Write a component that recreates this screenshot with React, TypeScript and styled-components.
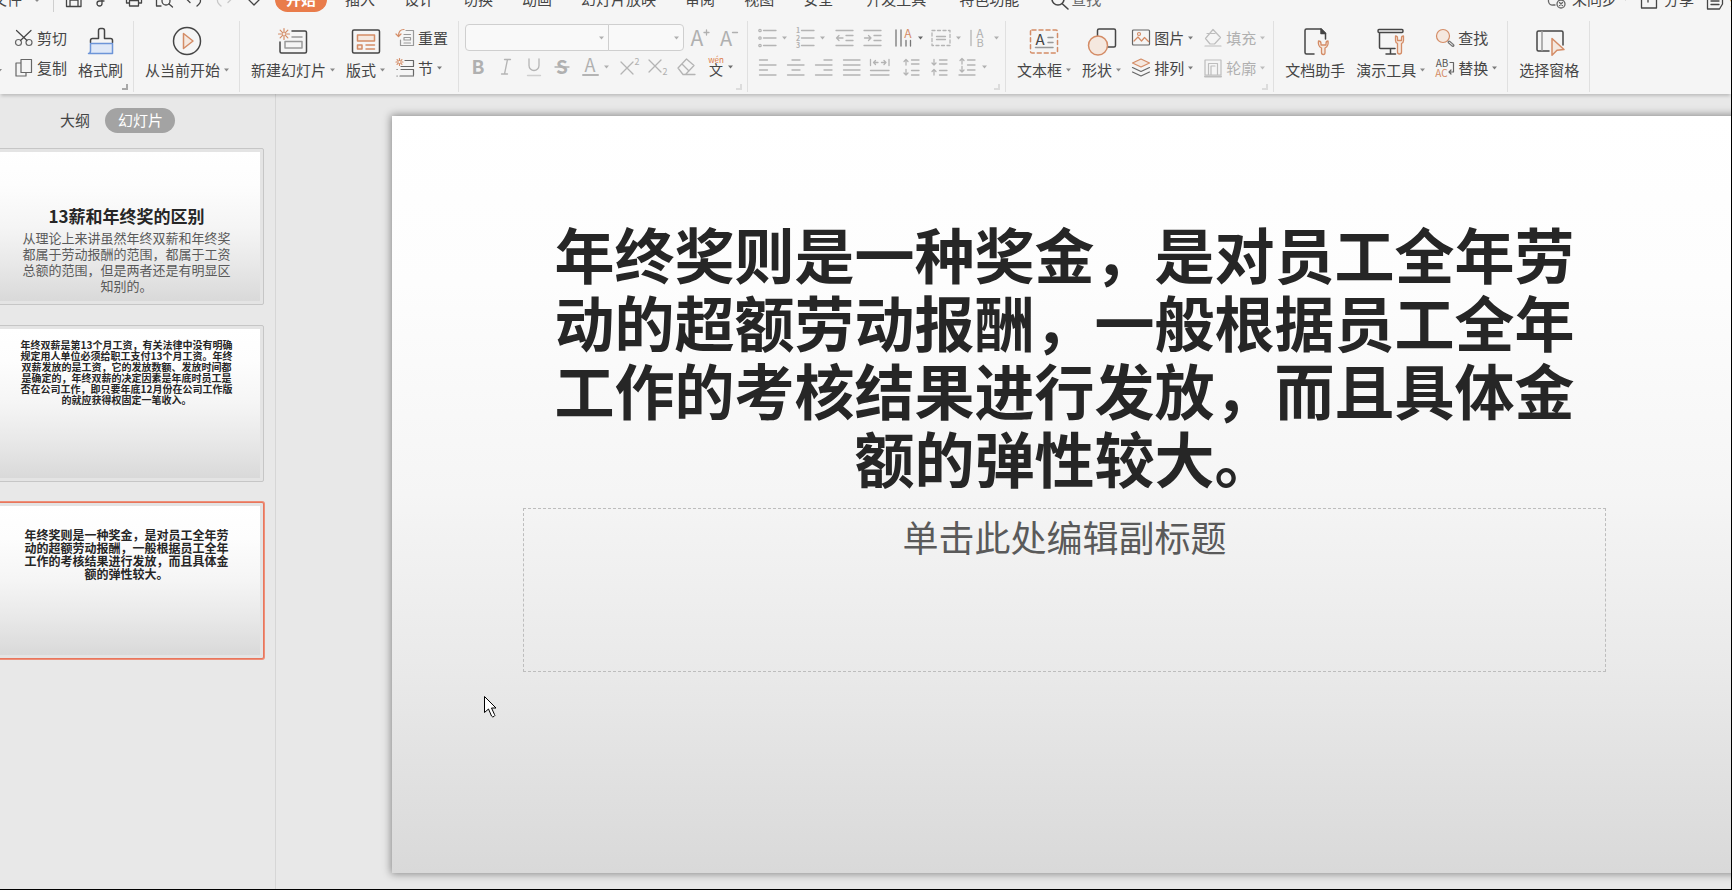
import React from "react";
import styled, { createGlobalStyle, css } from "styled-components";

const ink = "#454545";
const soft = "#b0b0b0";
const accent = "#d48c66";
const tint = "#f5e8df";

const GlobalStyle = createGlobalStyle`
  *, *::before, *::after { box-sizing: border-box; }
  html, body { margin: 0; padding: 0; }
  body {
    font-family: "Noto Sans CJK SC", "Liberation Sans", sans-serif;
    font-size: 15px;
    line-height: 20px;
    color: ${ink};
    background: #e8e8e8;
  }
  button, input, select { font: inherit; color: inherit; margin: 0; padding: 0; border: 0; background: none; }
  svg { display: block; flex: none; overflow: visible; }
  h1, h2, p { margin: 0; font-weight: 400; }
`;

const Window = styled.div`
  display: flex;
  flex-direction: column;
  min-height: 100vh;
  overflow: hidden;
  border-right: 1px solid #000;
  border-bottom: 1px solid #000;
`;

/* ---------- menu bar ---------- */

const MenuBar = styled.header`
  display: flex;
  align-items: flex-end;
  height: 20px;
  padding-bottom: 8px;
  background: #f5f5f5;
  overflow: hidden;
  white-space: nowrap;
`;

const FileMenu = styled.button`
  display: flex;
  align-items: center;
  gap: 10px;
  height: 25px;
  margin-left: -8px;
  padding-bottom: 2px;
`;

const BarDivider = styled.span`
  width: 1px;
  height: 26px;
  margin: 0 10px 0 11px;
  background: #cfcfcf;
`;

const QuickAccess = styled.div`
  display: flex;
  gap: 11px;
  margin-right: 12px;
`;

const QuickButton = styled.button`
  display: grid;
  place-items: center;
  width: 19px;
  height: 25px;
  padding-bottom: 2px;
`;

const TabList = styled.nav`
  display: flex;
  gap: 29px;
`;

const Tab = styled.button<{ $active?: boolean; $wide?: boolean }>`
  height: 25px;
  padding-bottom: 2px;
  ${(p) => p.$wide && css`margin-left: 4px;`}
  ${(p) =>
    p.$active &&
    css`
      padding: 0 11px 2px;
      margin-right: -11px;
      border-radius: 13px;
      background: #e97c4b;
      color: #fff;
      font-weight: 700;
    `}
`;

const SearchBox = styled.label`
  display: flex;
  align-items: center;
  gap: 2px;
  height: 25px;
  margin-left: 32px;
  padding-bottom: 2px;
  color: #6a6a6a;
`;

const SearchInput = styled.input`
  width: 80px;
  height: 23px;
  &::placeholder { color: #6a6a6a; opacity: 1; }
`;

const BarActions = styled.div`
  display: flex;
  gap: 12px;
  margin-left: auto;
  margin-right: -29px;
`;

const BarAction = styled.button`
  display: flex;
  align-items: center;
  gap: 6px;
  height: 25px;
  padding-bottom: 2px;
`;

/* ---------- ribbon ---------- */

const Ribbon = styled.div`
  position: relative;
  z-index: 1;
  display: flex;
  padding: 1px 0 2px;
  background: #f5f5f5;
  box-shadow: 0 3px 3px -1px rgba(0, 0, 0, 0.18);
`;

const Group = styled.section<{ $left?: number; $right?: number }>`
  position: relative;
  display: flex;
  flex: none;
  gap: 11px;
  height: 71px;
  padding: 0 ${(p) => p.$right ?? 10}px 0 ${(p) => p.$left ?? 11}px;
  border-right: 1px solid #e0e0e0;
`;

const Launcher = styled.button<{ $dim?: boolean }>`
  position: absolute;
  right: 5px;
  bottom: 2px;
  width: 6px;
  height: 6px;
  border-right: 2px solid ${(p) => (p.$dim ? "#dcdcdc" : "#a8a8a8")};
  border-bottom: 2px solid ${(p) => (p.$dim ? "#dcdcdc" : "#a8a8a8")};
`;

const BigButton = styled.button`
  display: flex;
  flex-direction: column;
  align-items: center;
  gap: 6px;
  height: 71px;
  padding-top: 5px;
`;

const Label = styled.span`
  display: flex;
  align-items: center;
  gap: 4px;
  height: 20px;
  white-space: nowrap;
`;

const Stack = styled.div`
  display: flex;
  flex-direction: column;
  padding-top: 2px;
`;

const SmallButton = styled.button`
  display: flex;
  align-items: center;
  gap: 4px;
  height: 30px;
  &:disabled { color: ${soft}; }
`;

const PasteTail = styled.button`
  width: 5px;
  height: 71px;
  padding-top: 26px;
  margin-left: -3px;
  margin-right: 2px;
`;

const ToolPanel = styled.div`
  display: flex;
  flex-direction: column;
  padding-top: 2px;
`;

const ToolRow = styled.div`
  display: flex;
  align-items: center;
  height: 29px;
`;

const Tool = styled.button<{ $gap?: boolean }>`
  display: flex;
  align-items: center;
  gap: 3px;
  height: 28px;
  padding: 0 4px;
  ${(p) => p.$gap && css`margin-left: 4px;`}
`;

const Combo = styled.label<{ $side: "left" | "right" }>`
  display: flex;
  align-items: center;
  height: 27px;
  padding-right: 4px;
  border: 1px solid #cfcfcf;
  background: #f9f9f9;
  ${(p) =>
    p.$side === "left"
      ? css`width: 144px; margin-left: 1px; border-radius: 4px 0 0 4px;`
      : css`width: 76px; margin-left: -1px; margin-right: 1px; border-radius: 0 4px 4px 0;`}
`;

const ComboSelect = styled.select`
  flex: 1;
  min-width: 0;
  height: 25px;
  appearance: none;
`;

/* ---------- workspace ---------- */

const Workspace = styled.div`
  display: flex;
  flex: 1;
`;

const Sidebar = styled.aside`
  flex: none;
  width: 276px;
  border-right: 1px solid #d6d6d6;
  overflow: hidden;
`;

const ViewSwitch = styled.div`
  display: flex;
  align-items: center;
  gap: 15px;
  padding: 14px 0 15px 60px;
`;

const ViewButton = styled.button<{ $active?: boolean }>`
  height: 25px;
  padding-bottom: 2px;
  ${(p) =>
    p.$active &&
    css`
      padding: 0 12px 2px 13px;
      border-radius: 13px;
      background: #a3a3a3;
      color: #fff;
    `}
`;

const ThumbList = styled.div`
  display: flex;
  flex-direction: column;
  gap: 20px;
  margin-left: -11px;
`;

const paper = css`
  background: linear-gradient(#fff 0%, #fdfdfd 22%, #f5f5f5 50%, #e9e9e9 74%, #d9d9d9 100%);
`;

const Thumb = styled.button<{ $active?: boolean }>`
  display: block;
  width: 275px;
  height: 157px;
  padding: 3px;
  border: 1px solid ${(p) => (p.$active ? "#e8765c" : "#c6c6c6")};
  border-radius: 2px;
  background: #e4e4e4;
  ${(p) => p.$active && css`box-shadow: 0 0 0 1px #ee8f79;`}
`;

const ThumbPage = styled.span<{ $top: number }>`
  ${paper}
  display: flex;
  flex-direction: column;
  align-items: center;
  gap: 2px;
  height: 149px;
  padding-top: ${(p) => p.$top}px;
  text-align: center;
  white-space: nowrap;
`;

const ThumbText = styled.span<{ $size: number; $line: number; $bold?: boolean }>`
  font-size: ${(p) => p.$size}px;
  line-height: ${(p) => p.$line}px;
  font-weight: ${(p) => (p.$bold ? 700 : 400)};
  color: ${(p) => (p.$bold ? "#262626" : "#5a5a5a")};
`;

const Stage = styled.main`
  flex: 1;
  min-width: 0;
  padding: 22px 0 16px 116px;
  overflow: hidden;
`;

const Slide = styled.article`
  ${paper}
  position: relative;
  display: flex;
  flex-direction: column;
  align-items: center;
  aspect-ratio: 16 / 9;
  margin-right: -7px;
  padding: 103px 132px 0 131px;
  box-shadow: 0 0 8px 1px rgba(0, 0, 0, 0.42);
`;

const SlideTitle = styled.h1`
  font-size: 60px;
  line-height: 68px;
  font-weight: 700;
  color: #262626;
  text-align: center;
  white-space: nowrap;
`;

const Subtitle = styled.p`
  align-self: stretch;
  height: 164px;
  margin-top: 17px;
  padding-top: 5px;
  border: 1px dashed #bdbdbd;
  font-size: 36px;
  line-height: 44px;
  color: #5a5a5a;
  text-align: center;
`;

const Pointer = styled.span`
  position: absolute;
  left: 92px;
  top: 580px;
`;

/* ---------- drawings ---------- */

const Svg = ({ s = 20, w, children, c = ink, sw = 1.3 }: { s?: number; w?: number; children: React.ReactNode; c?: string; sw?: number }) => (
  <svg
    width={w ?? s}
    height={s}
    viewBox={`0 0 ${w ?? s} ${s}`}
    fill="none"
    stroke={c}
    strokeWidth={sw}
    strokeLinecap="round"
    strokeLinejoin="round"
    aria-hidden="true"
  >
    {children}
  </svg>
);

const Arrow = ({ c = "#8a8a8a", w = 5 }: { c?: string; w?: number }) => (
  <svg width={w} height="4" viewBox="0 0 5 4" fill={c} aria-hidden="true">
    <path d="M0 .5h5L2.5 3.5z" />
  </svg>
);

const Chevron = ({ c = "#888", s = 10 }: { c?: string; s?: number }) => (
  <Svg s={s} c={c}>
    <path d={`M.5 2.5 ${s / 2} ${s / 2 + 2} ${s - 0.5} 2.5`} />
  </Svg>
);

const Glyph = ({ x, y, size, c = soft, bold, children }: { x: number; y: number; size: number; c?: string; bold?: boolean; children: string }) => (
  <text
    x={x}
    y={y}
    fontSize={size}
    fill={c}
    stroke="none"
    fontFamily='"Noto Sans CJK SC", sans-serif'
    fontWeight={bold ? 700 : 400}
    textAnchor="middle"
  >
    {children}
  </text>
);

const Star = ({ x, y, r }: { x: number; y: number; r: number }) => {
  const d = r * 0.7;
  return (
    <path
      stroke={accent}
      strokeWidth={1.2}
      d={`M${x - r} ${y}H${x - 1.5}M${x + 1.5} ${y}H${x + r}M${x} ${y - r}V${y - 1.5}M${x} ${y + 1.5}V${y + r}M${x - d} ${y - d}L${x - 1.2} ${y - 1.2}M${x + 1.2} ${y + 1.2}L${x + d} ${y + d}M${x - d} ${y + d}L${x - 1.2} ${y + 1.2}M${x + 1.2} ${y - 1.2}L${x + d} ${y - d}`}
    />
  );
};

const wrench = "M0 0v4.5q0 2 2 3V16q0 2 2 2t2-2V7.500q2-1 2-3V0q-2 0-2 2v2.500H2V2Q2 0 0 0z";

const quick: { name: string; art: React.ReactNode }[] = [
  { name: "保存", art: <Svg s={18}><path d="M1.500 1.500h12l2.500 2.500v12.500H1.500zM5 16V10h8v6M5 2v4h7V2" /></Svg> },
  { name: "输出", art: <Svg s={18}><path d="M5 9h6a3.500 3.500 0 0 0 0-7H6M7 9v4.500a2.500 2.500 0 1 1-2.500-2.500H9" /></Svg> },
  { name: "打印", art: <Svg s={18}><path d="M4 13H1.500V6h15v7H14M4.500 6V1.500h9V6M4.500 10.500h9V16h-9z" /></Svg> },
  { name: "预览", art: <Svg s={18}><path d="M6 16H1.500V1.500h13V6" /><circle cx="11" cy="11" r="4" /><path d="m14 14 3.500 3" /></Svg> },
  { name: "撤销", art: <Svg s={18}><path d="M5 4 1 8.500 5 12.500M2 8.500h9.500q4-.5 4 2.500 0 2-3.500 5" /></Svg> },
  { name: "恢复", art: <Svg s={18} c="#c8c8c8"><path d="m13 4 4 4.500-4 4M16 8.500H7q-5-.5-4.500 2.500 0 2 3.500 5" /></Svg> },
  { name: "更多", art: <Svg s={18}><path d="m4 10 5 5 5-5" /></Svg> },
];

const tabs = ["插入", "设计", "切换", "动画", "幻灯片放映", "审阅", "视图", "安全", "开发工具", "特色功能"];

type ToolItem = { name: string; art: React.ReactNode; drop?: string; gap?: boolean };

const Tools = ({ items }: { items: ToolItem[] }) => (
  <>
    {items.map((t) => (
      <Tool key={t.name} aria-label={t.name} $gap={t.gap}>
        {t.art}
        {t.drop && <Arrow c={t.drop} w={7} />}
      </Tool>
    ))}
  </>
);

const G = "#b4b4b4";

const sizeTools: ToolItem[] = [
  { name: "增大字号", art: <Svg><Glyph x={8} y={18} size={21}>A</Glyph><path stroke={soft} d="M17.500 2v5M15 4.500h5" /></Svg> },
  { name: "减小字号", art: <Svg><Glyph x={9} y={18} size={20}>A</Glyph><path stroke={soft} d="M15.500 4.500h5" /></Svg> },
];

const fontTools: ToolItem[] = [
  { name: "加粗", art: <Svg><Glyph x={10} y={17} size={19} bold>B</Glyph></Svg> },
  { name: "倾斜", art: <Svg c={G}><path d="M8.500 2.500h6M5.500 17h6M11.500 2.500 8.500 17" /></Svg> },
  { name: "下划线", art: <Svg c={G}><path d="M5 2v6.500a5 5 0 0 0 10 0V2" /><path stroke="#cfcfcf" d="M3.500 18.500h13" /></Svg> },
  { name: "删除线", art: <Svg><Glyph x={10} y={17} size={19} bold>S</Glyph><path stroke={soft} d="M3 10h14" /></Svg> },
  { name: "字体颜色", art: <Svg><Glyph x={10} y={15} size={18}>A</Glyph><path stroke={G} strokeWidth="2" d="M3 18h15" /></Svg>, drop: soft },
  { name: "上标", art: <Svg c={G}><path d="m3 5 12 12M15 5 3 17" /><Glyph x={19} y={8} size={9}>2</Glyph></Svg> },
  { name: "下标", art: <Svg c={G}><path d="m3 3 12 12M15 3 3 15" /><Glyph x={19} y={18} size={9}>2</Glyph></Svg> },
  { name: "清除格式", art: <Svg c={G}><path d="m4 11 8.500-9 7.500 6.500-8.500 9H9zM8 7l7 7M9 17.500h12" /></Svg> },
  { name: "拼音指南", art: <Svg w={22}><Glyph x={14} y={6} size={8} c="#dc7a45">wén</Glyph><Glyph x={14} y={18} size={14} c={ink}>文</Glyph></Svg>, drop: "#6e6e6e" },
];

const dots = "M5.500 2.500H18M5.500 10H18M5.500 17.500H18";

const listTools: ToolItem[] = [
  { name: "项目符号", art: <Svg c={G}><path d={dots} /><circle cx="2" cy="2.500" r="1.200" /><circle cx="2" cy="10" r="1.200" /><circle cx="2" cy="17.500" r="1.200" /></Svg>, drop: soft },
  { name: "编号", art: <Svg c={G}><path d={dots} /><Glyph x={2} y={5} size={7} bold>1</Glyph><Glyph x={2} y={12.500} size={7} bold>2</Glyph><Glyph x={2} y={20} size={7} bold>3</Glyph></Svg>, drop: soft },
  { name: "减少缩进", art: <Svg c={G}><path d="M2 2.500h17M12 7.500h7M12 12.500h7M2 17.500h17M2.500 10H9M5 7.500 2.500 10 5 12.500" /></Svg> },
  { name: "增加缩进", art: <Svg c={G}><path d="M2 2.500h17M12 7.500h7M12 12.500h7M2 17.500h17M2.500 10H9M6.500 7.500 9 10l-2.500 2.500" /></Svg> },
  { name: "文字方向", art: <Svg c="#777"><path d="M2 2v16M7 2v16M12 12.500V18M16.500 12.500V18" /><Glyph x={14} y={9.5} size={12} c={accent}>A</Glyph></Svg>, drop: "#666", gap: true },
  { name: "对齐文本", art: <Svg c={G}><rect x="0" y="2.500" width="18" height="15" strokeDasharray="3 2.500" /><path d="M4.500 8.500h9M4.500 11.500h9" /></Svg>, drop: soft },
  { name: "文字排列", art: <Svg c={G}><path d="M1 2.500v15" /><Glyph x={10} y={9.500} size={12}>A</Glyph><Glyph x={10} y={18.500} size={11}>B</Glyph></Svg>, drop: soft },
];

const alignTools: ToolItem[] = [
  { name: "左对齐", art: <Svg c={G}><path d="M1.500 3h8M1.500 8H18M1.500 13h8M1.500 18H18" /></Svg> },
  { name: "居中", art: <Svg c={G}><path d="M6 3h8M1.500 8H18M6 13h8M1.500 18H18" /></Svg> },
  { name: "右对齐", art: <Svg c={G}><path d="M10 3h8M1.500 8H18M10 13h8M1.500 18H18" /></Svg> },
  { name: "两端对齐", art: <Svg c={G}><path d="M1.500 3H18M1.500 8H18M1.500 13H18M1.500 18H18" /></Svg> },
  { name: "分散对齐", art: <Svg c={G}><path d="M.5 2.500v6M19 2.500v6M3.500 5.500H8M11.500 5.500H16M5.500 3.500l-2 2 2 2M14 3.500l2 2-2 2M.5 13.500H19M.5 18H19" /></Svg> },
  { name: "增大行距", art: <Svg c={G}><path d="M9.500 3H17M9.500 7H17M9.500 13.500H17M9.500 18H17M4 8V2.500M2 4.500l2-2 2 2M4 12.500V18M2 16l2 2 2-2" /></Svg>, gap: true },
  { name: "减小行距", art: <Svg c={G}><path d="M9.500 3H17M9.500 7H17M9.500 13.500H17M9.500 18H17M4 2.500V8M2 6l2 2 2-2M4 18v-5.500M2 14.500l2-2 2 2" /></Svg> },
  { name: "行距", art: <Svg c={G}><path d="M9.500 3H17M9.500 8H17M9.500 13H17M1 18h16M4 7V1.500M2 3.500l2-2 2 2M4 9.500V15M2 13l2 2 2-2" /></Svg>, drop: soft },
];

const Big = ({ text, drop, children }: { text: string; drop?: boolean; children: React.ReactNode }) => (
  <BigButton>
    <Svg s={28} sw={1.5}>{children}</Svg>
    <Label>{text}{drop && <Arrow />}</Label>
  </BigButton>
);

const Small = ({ text, drop, disabled, children }: { text: string; drop?: boolean; disabled?: boolean; children: React.ReactNode }) => (
  <SmallButton disabled={disabled}>
    <Svg s={18} c={disabled ? "#bdbdbd" : "#666"} sw={1.2}>{children}</Svg>
    <Label>{text}{drop && <Arrow c={disabled ? "#bdbdbd" : "#7a7a7a"} />}</Label>
  </SmallButton>
);

const Lines = ({ rows }: { rows: string[] }) => (
  <>
    {rows.map((row, i) => (
      <React.Fragment key={row}>
        {i > 0 && <br />}
        {row}
      </React.Fragment>
    ))}
  </>
);

const bonus = [
  "年终奖则是一种奖金，是对员工全年劳",
  "动的超额劳动报酬，一般根据员工全年",
  "工作的考核结果进行发放，而且具体金",
  "额的弹性较大。",
];

const theory = [
  "从理论上来讲虽然年终双薪和年终奖",
  "都属于劳动报酬的范围，都属于工资",
  "总额的范围，但是两者还是有明显区",
  "知别的。",
];

const doublePay = [
  "年终双薪是第13个月工资，有关法律中没有明确",
  "规定用人单位必须给职工支付13个月工资。年终",
  "双薪发放的是工资，它的发放数额、发放时间都",
  "是确定的，年终双薪的决定因素是年底时员工是",
  "否在公司工作，即只要年底12月份在公司工作版",
  "的就应获得权固定一笔收入。",
];

export default function App() {
  return (
    <>
      <GlobalStyle />
      <Window>
        <MenuBar>
          <FileMenu>文件<Chevron /></FileMenu>
          <BarDivider />
          <QuickAccess>
            {quick.map((q) => (
              <QuickButton key={q.name} aria-label={q.name}>{q.art}</QuickButton>
            ))}
          </QuickAccess>
          <TabList aria-label="功能区">
            <Tab $active>开始</Tab>
            {tabs.map((t) => (
              <Tab key={t} $wide={t.length === 4}>{t}</Tab>
            ))}
          </TabList>
          <SearchBox>
            <Svg s={18} sw={1.6}><circle cx="7" cy="9" r="6" /><path d="m11.500 14 5.500 5" /></Svg>
            <SearchInput placeholder="查找" aria-label="查找命令" />
          </SearchBox>
          <BarActions>
            <BarAction>
              <Svg s={18} c="#666"><path d="M7 15H5a4 4 0 0 1-1-8 5 5 0 0 1 9-1" /><circle cx="13" cy="14" r="4" /><path d="m11.500 12.500 3 3M14.500 12.500l-3 3" /></Svg>
              未同步<Arrow />
            </BarAction>
            <BarAction>
              <Svg s={18}><path d="M6 4H1.500v14h15V9M8 12V3h7" /></Svg>
              分享
            </BarAction>
            <BarAction>
              <Svg s={18}><path d="M1.500 2h15v12l-3 5h-12zM5 11h8M5 14.500h8" /></Svg>
              批注
            </BarAction>
          </BarActions>
        </MenuBar>

        <Ribbon>
          <Group $left={0}>
            <PasteTail aria-label="粘贴选项"><svg width="5" height="44" viewBox="0 0 5 44" fill="#8a8a8a" aria-hidden="true"><path d="M0 21h5l-2.500 3z" /></svg></PasteTail>
            <Stack>
              <Small text="剪切">
                <circle cx="3.500" cy="13.500" r="3" /><circle cx="14" cy="13.500" r="3" /><path stroke={ink} d="M1.500 1.500 12 11.500M16 1.500 5.500 11.500" />
              </Small>
              <Small text="复制">
                <path d="M6 .5h10.500v13H6zM6 4H1v13h10v-3.500" />
              </Small>
            </Stack>
            <Big text="格式刷">
              <path d="M3.500 16.500v-2q0-2 2-2h6v-8q0-2 2-2h2q2 0 2 2v8h6q2 0 2 2v2" />
              <path stroke="#6d95d8" fill="#dfe8f7" d="M3.500 17.500h22v10H1.500q2 0 2-3z" />
            </Big>
            <Launcher aria-label="剪贴板选项" />
          </Group>

          <Group>
            <Big text="从当前开始" drop>
              <circle cx="14" cy="15" r="13.500" />
              <path stroke={accent} fill={tint} d="M10.500 7.500 20 15l-9.500 7.500z" />
            </Big>
          </Group>

          <Group>
            <Big text="新建幻灯片" drop>
              <Star x={5} y={8} r={5.500} />
              <path d="M13 5h13q1.500 0 1.500 1.500v19q0 1.500-1.500 1.500H2.500Q1 27 1 25.500V16" />
              <path stroke="#999" d="M13 11h10M6 15.500h17V22H6z" />
            </Big>
            <Big text="版式" drop>
              <rect x=".5" y="4" width="27" height="23" rx="1.500" />
              <path stroke={accent} fill={tint} d="M5.500 9h17v6h-17zM5.500 19H10v4H5.500z" />
              <path stroke={accent} d="M14 19h8.500M14 23h8.500" />
            </Big>
            <Stack>
              <Small text="重置">
                <path stroke="#999" d="M10 1.500h7.500v15h-13V11M8 5.500h6.500M8 8.500h6.500v2.500H8zM8 14h6.500" />
                <path stroke={accent} d="M8 .5Q2.500.5 2.500 7M0 5l2.500 2.500L5 5" />
              </Small>
              <Small text="节" drop>
                <Star x={3.500} y={3} r={3.500} />
                <path d="M9 1.500h8.500V7M5 7.500h12.500M1 10.500h.2M5 10.500h12.500V16M1 17h.2M4 17h13.500" />
              </Small>
            </Stack>
          </Group>

          <Group $left={5} $right={6}>
            <ToolPanel>
              <ToolRow>
                <Combo $side="left"><ComboSelect aria-label="字体" /><Arrow c={soft} /></Combo>
                <Combo $side="right"><ComboSelect aria-label="字号" /><Arrow c={soft} /></Combo>
                <Tools items={sizeTools} />
              </ToolRow>
              <ToolRow><Tools items={fontTools} /></ToolRow>
            </ToolPanel>
            <Launcher $dim aria-label="字体选项" />
          </Group>

          <Group $left={6} $right={1}>
            <ToolPanel>
              <ToolRow><Tools items={listTools} /></ToolRow>
              <ToolRow><Tools items={alignTools} /></ToolRow>
            </ToolPanel>
            <Launcher $dim aria-label="段落选项" />
          </Group>

          <Group $right={8}>
            <Big text="文本框" drop>
              <rect x=".5" y="4" width="27" height="23" rx="1.500" stroke={accent} strokeDasharray="4 3" />
              <Glyph x={10} y={19} size={15} c={ink}>A</Glyph>
              <path stroke="#999" d="M18 11.500h5M18 16.500h5M5.500 21.500H23" />
            </Big>
            <Big text="形状" drop>
              <rect x="9.500" y="3" width="18" height="18" rx="1.500" />
              <circle cx="10" cy="19.500" r="9.500" stroke={accent} fill={tint} />
            </Big>
            <Stack>
              <Small text="图片" drop>
                <rect x=".5" y="1" width="17" height="15" rx="1" />
                <path stroke={accent} d="m2 12 4-4 3.500 4 3-3.500 4 4" /><circle cx="7" cy="5" r="1.500" stroke={accent} />
              </Small>
              <Small text="排列" drop>
                <path stroke={accent} fill={tint} d="M9 0 17.500 4 9 8 .5 4z" />
                <path d="m.5 8.500 8.500 4 8.500-4M.5 13 9 17l8.500-4" />
              </Small>
            </Stack>
            <Stack>
              <Small text="填充" drop disabled>
                <path d="M1.500 9.500 9 .5l7.500 8-6 6.500H6zM3 4.500h8M1 17h16" />
              </Small>
              <Small text="轮廓" drop disabled>
                <path d="M1 1h16v15H1zM4.500 16V4.500h9V16M7 16V7h4" /><path strokeWidth="2" d="M1 17.500h16" />
              </Small>
            </Stack>
            <Launcher $dim aria-label="绘图选项" />
          </Group>

          <Group>
            <Big text="文档助手">
              <path d="M13 28H5.500Q4 28 4 26.500V4.500Q4 3 5.500 3H20l4.500 4.500V13" />
              <path fill={ink} d="M20 3v4.500h4.500z" />
              <path stroke={accent} fill={tint} strokeWidth="1.300" d="M17.500 15q-1 5 3 7v4.500q0 2 1.800 2t1.700-2V22q4-2 3-7-2 0-2 2.500v1.500h-5V17.500q0-2.500-2.500-2.500z" />
            </Big>
            <Big text="演示工具" drop>
              <path d="M2 3.500h23q1 0 1 1.500t-1 1.500H2Q1 6.500 1 5t1-1.500zM2.500 7v14.500q0 1 1 1H18M13.500 23v4.500M9 28h9.500" />
              <g transform="translate(18.500 10)"><path stroke={accent} fill={tint} strokeWidth="1.300" d={wrench} /></g>
            </Big>
            <Stack>
              <Small text="查找">
                <circle cx="7" cy="7" r="6.500" stroke={accent} fill={tint} /><path strokeWidth="3" stroke="#777" d="m13 13 4 3.500" /><path strokeWidth="1" stroke="#f5f5f5" d="m13.500 13.500 3 2.500" />
              </Small>
              <Small text="替换" drop>
                <Glyph x={6} y={8} size={10} c="#555">AB</Glyph><Glyph x={5.500} y={18} size={10} c={accent}>AC</Glyph>
                <path d="M14 3.500h3.500V13H13M15 11l-2 2 2 2" />
              </Small>
            </Stack>
          </Group>

          <Group>
            <Big text="选择窗格">
              <path d="M14 25H3.500Q2 25 2 23.500V6.500Q2 5 3.500 5h23Q28 5 28 6.500V19" /><path stroke="#999" d="M7 5.500v19" />
              <path stroke={accent} fill={tint} d="m17 12.500 12 11-7 .8-5 5z" />
            </Big>
          </Group>
        </Ribbon>

        <Workspace>
          <Sidebar>
            <ViewSwitch>
              <ViewButton>大纲</ViewButton>
              <ViewButton $active>幻灯片</ViewButton>
            </ViewSwitch>
            <ThumbList>
              <Thumb aria-label="幻灯片 1">
                <ThumbPage $top={52}>
                  <ThumbText $size={17} $line={24} $bold>13薪和年终奖的区别</ThumbText>
                  <ThumbText $size={13} $line={16}><Lines rows={theory} /></ThumbText>
                </ThumbPage>
              </Thumb>
              <Thumb aria-label="幻灯片 2">
                <ThumbPage $top={10}>
                  <ThumbText $size={10} $line={11} $bold><Lines rows={doublePay} /></ThumbText>
                </ThumbPage>
              </Thumb>
              <Thumb $active aria-label="幻灯片 3">
                <ThumbPage $top={22}>
                  <ThumbText $size={12} $line={13} $bold><Lines rows={bonus} /></ThumbText>
                </ThumbPage>
              </Thumb>
            </ThumbList>
          </Sidebar>

          <Stage>
            <Slide>
              <SlideTitle><Lines rows={bonus} /></SlideTitle>
              <Subtitle>单击此处编辑副标题</Subtitle>
              <Pointer>
                <svg width="13" height="22" viewBox="0 0 13 22" fill="#fff" stroke="#000" aria-hidden="true">
                  <path d="M.5.5v16l4-3.500 3 7q1 1.500 2.500.500t.5-2L7.500 12h4.500z" />
                </svg>
              </Pointer>
            </Slide>
          </Stage>
        </Workspace>
      </Window>
    </>
  );
}
